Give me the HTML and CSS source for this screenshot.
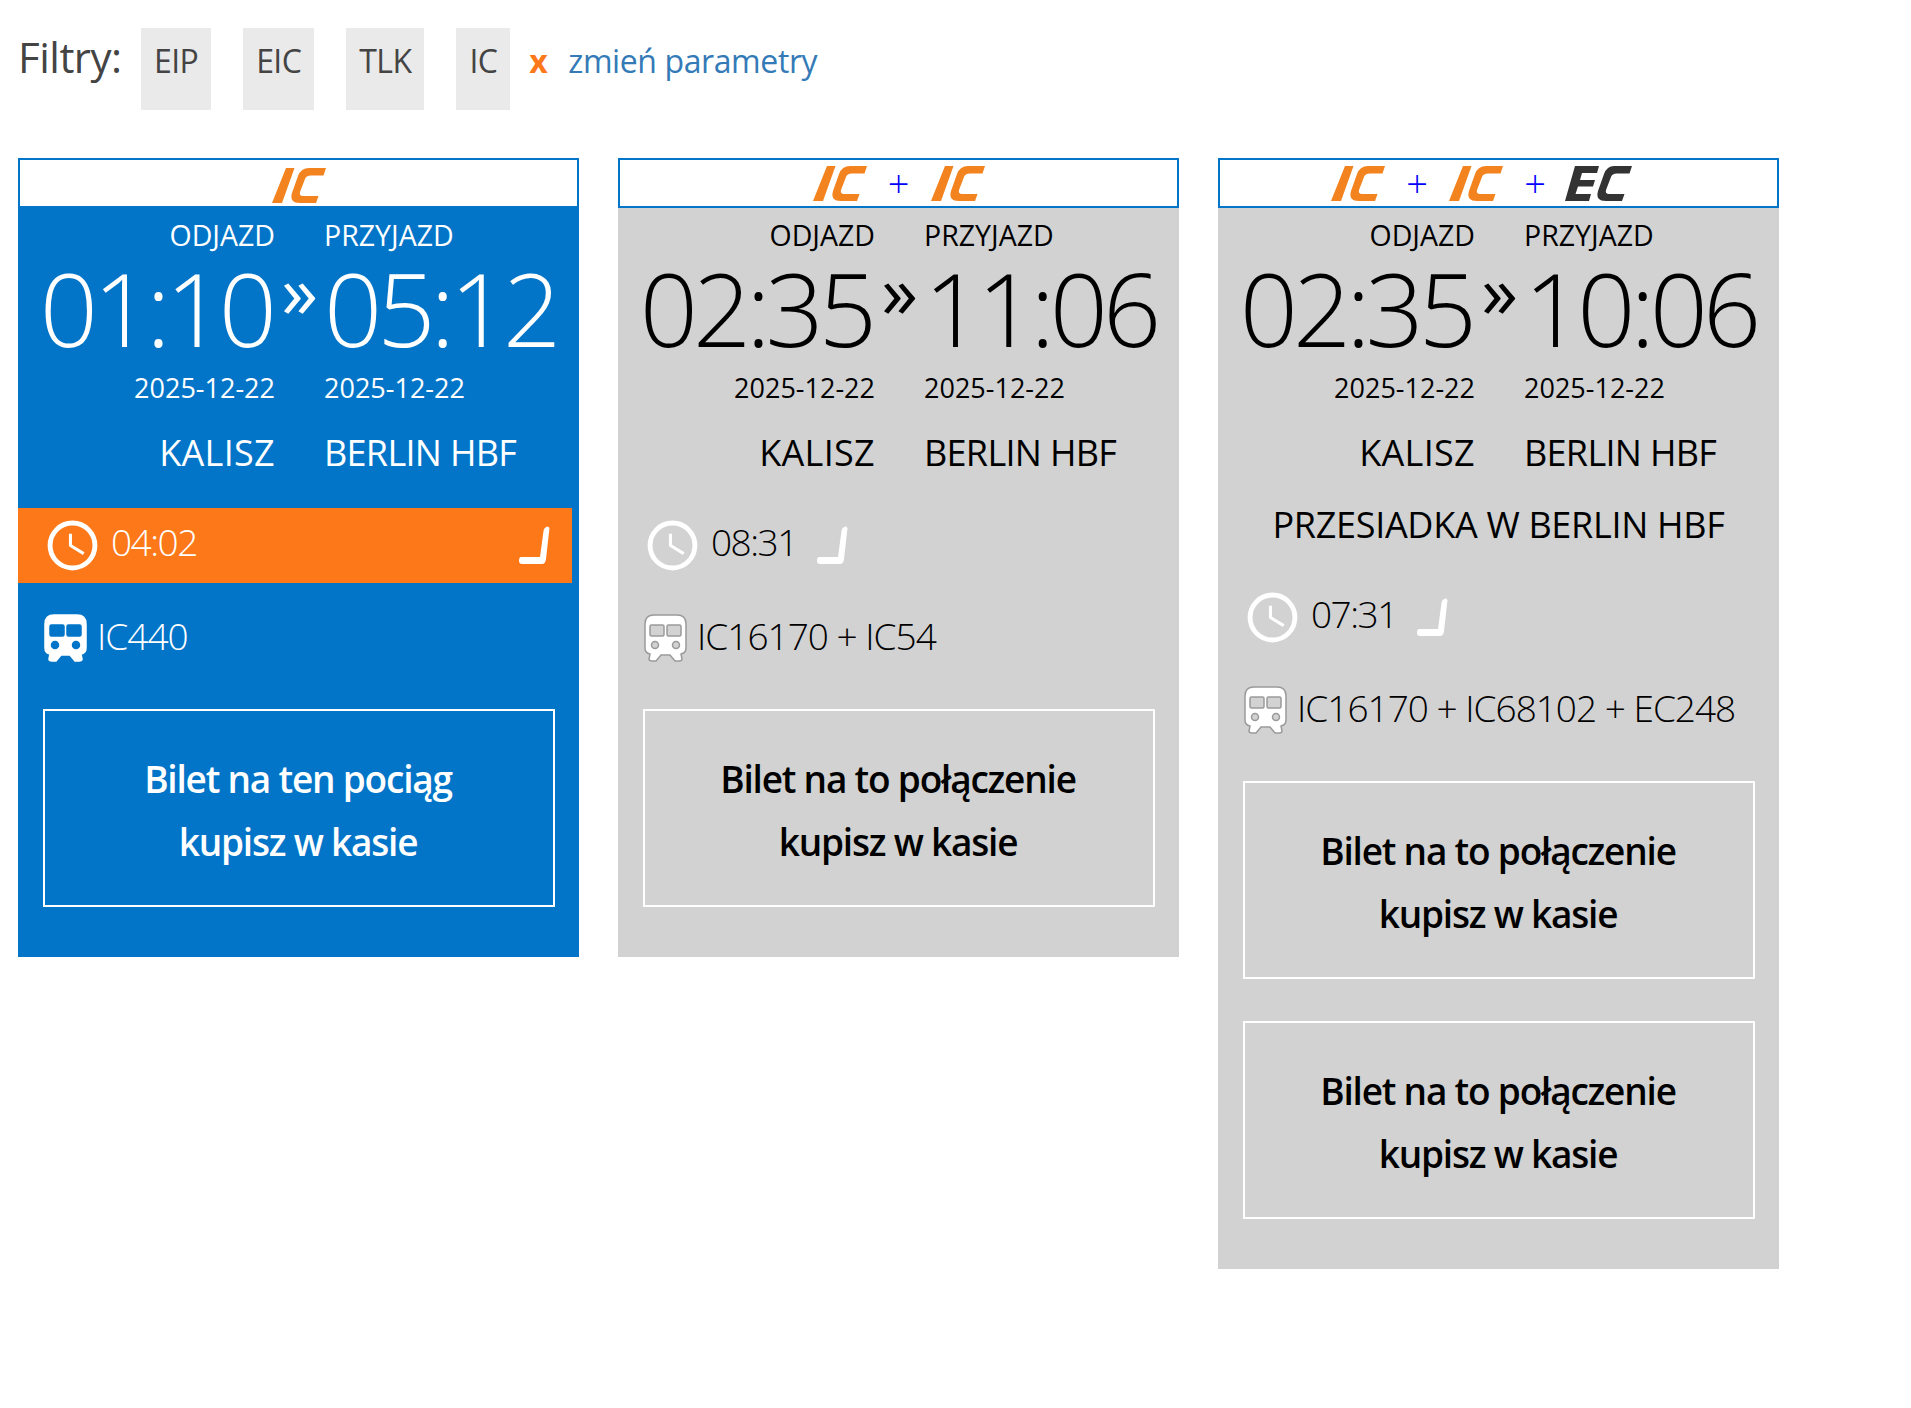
FILE: index.html
```html
<!DOCTYPE html>
<html lang="pl">
<head>
<meta charset="utf-8">
<title>Filtry</title>
<link rel="stylesheet" href="styles.css">
</head>
<body>
<svg class="defs" width="0" height="0" aria-hidden="true">
  <symbol id="logo-ic" viewBox="0 0 54 35">
    <path d="M14 0H22.500L10 35H0Z"/>
    <path d="M54 0H37Q29 0 26 8L20 25Q17 35 28 35H44L46.500 28H31Q27 28 28 24L33 11Q34 7.500 39 7.500H51.500Z"/>
  </symbol>
  <symbol id="logo-ec" viewBox="0 0 70 35">
    <path d="M13 0H37L35 7H20L18 14H33L31 20.500H16L13.500 28H29L27 35H3Z"/>
    <path d="M70 0H52Q45 0 42 8L36 25Q33 35 44 35H60L62.500 28H47Q43 28 44 24L49 11Q50 7.500 55 7.500H67.500Z"/>
  </symbol>
  <symbol id="clock" viewBox="0 0 50 50">
    <circle cx="25" cy="25" r="22" fill="none" stroke="currentColor" stroke-width="4.800"/>
    <path d="M23 13.500V25L36 33" fill="none" stroke="currentColor" stroke-width="3"/>
  </symbol>
  <symbol id="seat" viewBox="0 0 31 38">
    <path fill="currentColor" d="M2 31H21L24.500 5Q25 1 29 0.500L30.500 2L27 33Q26.500 38 23 38H3Q0 38 0 34.500Q0 31 2 31Z"/>
  </symbol>
  <symbol id="train" viewBox="0 0 43 48">
    <path class="train-body" d="M10 1H33Q42 1 42 10V34Q42 39 37 40L38 45Q38 47 35 47H31L26 41H17L12 47H8Q5 47 5 45L6 40Q1 39 1 34V10Q1 1 10 1Z"/>
    <rect class="train-window" x="6" y="11" width="14" height="11" rx="1.500"/>
    <rect class="train-window" x="23" y="11" width="14" height="11" rx="1.500"/>
    <circle class="train-window" cx="11" cy="31" r="3.500"/>
    <circle class="train-window" cx="32" cy="31" r="3.500"/>
  </symbol>
</svg>

<div class="filters">
  <span class="filters-title">Filtry:</span>
  <span class="chip">EIP</span>
  <span class="chip">EIC</span>
  <span class="chip">TLK</span>
  <span class="chip chip--last">IC</span>
  <span class="clear">x</span>
  <a class="change" href="#">zmień parametry</a>
</div>

<main class="cards">
  <article class="card card--active">
    <header class="card-head card-head--single">
      <svg class="logo logo--ic" role="img" aria-label="IC"><use href="#logo-ic"/></svg>
    </header>
    <div class="pair labels"><span class="left">ODJAZD</span><span class="right">PRZYJAZD</span></div>
    <div class="pair times"><span class="left">01:10</span><span class="mid">»</span><span class="right">05:12</span></div>
    <div class="pair dates"><span class="left">2025-12-22</span><span class="right">2025-12-22</span></div>
    <div class="pair stations"><span class="left">KALISZ</span><span class="right">BERLIN HBF</span></div>
    <div class="duration duration--selected">
      <svg class="clock"><use href="#clock"/></svg><span class="duration-text">04:02</span>
      <svg class="seat seat--end"><use href="#seat"/></svg>
    </div>
    <div class="train-row">
      <svg class="train"><use href="#train"/></svg><span class="train-text">IC440</span>
    </div>
    <div class="ticket">Bilet na ten pociąg<br>kupisz w kasie</div>
  </article>

  <article class="card">
    <header class="card-head">
      <svg class="logo logo--ic" role="img" aria-label="IC"><use href="#logo-ic"/></svg>
      <span class="plus">+</span>
      <svg class="logo logo--ic" role="img" aria-label="IC"><use href="#logo-ic"/></svg>
    </header>
    <div class="pair labels"><span class="left">ODJAZD</span><span class="right">PRZYJAZD</span></div>
    <div class="pair times"><span class="left">02:35</span><span class="mid">»</span><span class="right">11:06</span></div>
    <div class="pair dates"><span class="left">2025-12-22</span><span class="right">2025-12-22</span></div>
    <div class="pair stations"><span class="left">KALISZ</span><span class="right">BERLIN HBF</span></div>
    <div class="duration">
      <svg class="clock"><use href="#clock"/></svg><span class="duration-text">08:31</span>
      <svg class="seat"><use href="#seat"/></svg>
    </div>
    <div class="train-row">
      <svg class="train"><use href="#train"/></svg><span class="train-text">IC16170 + IC54</span>
    </div>
    <div class="ticket">Bilet na to połączenie<br>kupisz w kasie</div>
  </article>

  <article class="card">
    <header class="card-head">
      <svg class="logo logo--ic" role="img" aria-label="IC"><use href="#logo-ic"/></svg>
      <span class="plus">+</span>
      <svg class="logo logo--ic" role="img" aria-label="IC"><use href="#logo-ic"/></svg>
      <span class="plus">+</span>
      <svg class="logo logo--ec" role="img" aria-label="EC"><use href="#logo-ec"/></svg>
    </header>
    <div class="pair labels"><span class="left">ODJAZD</span><span class="right">PRZYJAZD</span></div>
    <div class="pair times"><span class="left">02:35</span><span class="mid">»</span><span class="right">10:06</span></div>
    <div class="pair dates"><span class="left">2025-12-22</span><span class="right">2025-12-22</span></div>
    <div class="pair stations"><span class="left">KALISZ</span><span class="right">BERLIN HBF</span></div>
    <div class="transfer">PRZESIADKA W BERLIN HBF</div>
    <div class="duration duration--after-transfer">
      <svg class="clock"><use href="#clock"/></svg><span class="duration-text">07:31</span>
      <svg class="seat"><use href="#seat"/></svg>
    </div>
    <div class="train-row">
      <svg class="train"><use href="#train"/></svg><span class="train-text">IC16170 + IC68102 + EC248</span>
    </div>
    <div class="ticket">Bilet na to połączenie<br>kupisz w kasie</div>
    <div class="ticket ticket--next">Bilet na to połączenie<br>kupisz w kasie</div>
  </article>
</main>
</body>
</html>
```

FILE: styles.css
```css
* { box-sizing: border-box; }

html, body { margin: 0; padding: 0; background: #fff; }

body {
  min-height: 1408px;
  font-family: "Open Sans", "Noto Sans", sans-serif;
  color: #000;
}

.defs { position: absolute; }

.filters {
  display: flex;
  align-items: center;
  height: 82px;
  margin: 28px 0 0 18px;
  font-size: 32px;
}

.filters-title {
  width: 123px;
  padding-bottom: 25px;
  font-size: 42px;
  letter-spacing: -0.5px;
  color: #444;
}

.chip {
  display: flex;
  align-items: center;
  height: 82px;
  margin-right: 32px;
  padding: 0 13px 17px;
  background: #eaeaea;
  letter-spacing: -0.6px;
  color: #444;
}

.chip--last { margin-right: 19px; }

.clear {
  width: 39px;
  padding-bottom: 17px;
  font-weight: 700;
  color: #fc7819;
}

.change {
  padding-bottom: 17px;
  letter-spacing: -0.4px;
  color: #337ab7;
  text-decoration: none;
}

.cards {
  display: flex;
  align-items: flex-start;
  gap: 39px;
  margin: 48px 0 0 18px;
}

.card {
  --train-stroke: #9a9a9a;
  --train-window: #d2d2d2;
  --train-window-stroke: #9a9a9a;
  width: 561px;
  padding-bottom: 50px;
  background: #d2d2d2;
  color: #000;
}

.card--active {
  --train-stroke: #fff;
  --train-window: #0275c9;
  --train-window-stroke: #0275c9;
  background: #0275c9;
  color: #fff;
}

.card-head {
  display: flex;
  align-items: center;
  justify-content: center;
  height: 50px;
  border: 2px solid #0275c9;
  background: #fff;
}

.logo { display: block; height: 35px; }
.logo--ic { width: 54px; fill: #f3831e; }
.logo--ec { width: 70px; margin: 0 34px 0 -5px; fill: #333; }

.card-head--single .logo { position: relative; top: 2px; }

.plus {
  width: 64px;
  text-align: center;
  font-size: 38px;
  font-weight: 300;
  line-height: 1;
  color: #00f;
}

.pair {
  display: grid;
  grid-template-columns: 257px 49px 1fr;
  white-space: nowrap;
}

.pair .left { grid-column: 1; text-align: right; }
.pair .right { grid-column: 3; }
.pair .mid { grid-column: 2; text-align: center; }

.labels {
  padding-top: 7px;
  font-size: 28.500px;
  line-height: 40px;
}

.times {
  padding-bottom: 4px;
  font-size: 102px;
  font-weight: 300;
  letter-spacing: -5px;
  line-height: 106px;
}

.times .left { padding-right: 3px; }

.times .mid {
  position: relative;
  top: -18px;
  font-size: 74px;
  font-weight: 400;
  letter-spacing: 0;
}

.dates {
  font-size: 27px;
  line-height: 45px;
}

.stations {
  margin-top: 20px;
  font-size: 36px;
  letter-spacing: -0.7px;
  line-height: 46px;
}

.stations .left { letter-spacing: 0.3px; }

.transfer {
  margin-top: 24px;
  text-align: center;
  font-size: 36px;
  letter-spacing: -0.3px;
  line-height: 50px;
}

.duration {
  display: flex;
  align-items: center;
  width: 554px;
  height: 75px;
  margin-top: 32px;
  padding-left: 29px;
  font-size: 37px;
  font-weight: 300;
  letter-spacing: -1.5px;
}

.duration--selected { background: #fc7819; }
.duration--after-transfer { margin-top: 30px; }

.clock {
  flex: none;
  width: 51px;
  height: 51px;
  color: #fff;
}

.duration-text { margin: 0 0 8px 13px; }

.seat {
  flex: none;
  width: 31px;
  height: 38px;
  margin: 0 0 2px 20px;
  color: #fff;
}

.seat--end { margin-left: auto; margin-right: 22px; }

.train-row {
  display: flex;
  align-items: center;
  height: 60px;
  margin-top: 22px;
  padding-left: 26px;
  font-size: 37px;
  font-weight: 300;
  letter-spacing: -1px;
}

.train {
  flex: none;
  width: 43px;
  height: 48px;
  margin-top: 6px;
}

.train-text { margin-left: 10px; }

.train-body { fill: #fff; stroke: var(--train-stroke); stroke-width: 1.500; }
.train-window { fill: var(--train-window); stroke: var(--train-window-stroke); stroke-width: 1.500; }

.ticket {
  display: flex;
  align-items: center;
  justify-content: center;
  width: 512px;
  height: 198px;
  margin: 44px 0 0 25px;
  padding: 4px 2px 0 0;
  border: 2px solid #fff;
  text-align: center;
  font-size: 37px;
  font-weight: 650;
  letter-spacing: -1.2px;
  line-height: 63px;
}

.ticket--next { margin-top: 42px; }
```
